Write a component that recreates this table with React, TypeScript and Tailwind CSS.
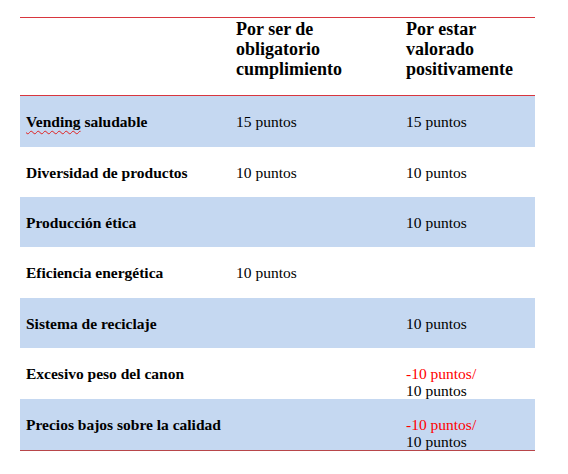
import React from "react";

type Row = {
  label: React.ReactNode;
  a?: string;
  b?: React.ReactNode;
  blue: boolean;
  h: string;
};

const neg = (
  <>
    <span className="text-[#ff0000]">-10 puntos/</span>
    <br />
    10 puntos
  </>
);

export default function App() {
  const rows: Row[] = [
    {
      label: (
        <>
          <span className="underline decoration-wavy decoration-[#e02020] decoration-1 underline-offset-[3px]">Vending</span> saludable
        </>
      ),
      a: "15 puntos",
      b: "15 puntos",
      blue: true,
      h: "h-[51px]",
    },
    { label: "Diversidad de productos", a: "10 puntos", b: "10 puntos", blue: false, h: "h-[50px]" },
    { label: "Producción ética", b: "10 puntos", blue: true, h: "h-[50px]" },
    { label: "Eficiencia energética", a: "10 puntos", blue: false, h: "h-[51px]" },
    { label: "Sistema de reciclaje", b: "10 puntos", blue: true, h: "h-[50px]" },
    { label: "Excesivo peso del canon", b: neg, blue: false, h: "h-[51px]" },
    { label: "Precios bajos sobre la calidad", b: neg, blue: true, h: "h-[51px]" },
  ];

  return (
    <div
      className="w-[568px] h-[474px] bg-white text-black pt-[17px] pl-[20px]"
      style={{ fontFamily: '"Liberation Serif", "Times New Roman", serif' }}
    >
      <div className="w-[515px] border-t border-[#d8363e]">
        <div className="grid grid-cols-[210px_170px_135px] h-[78px] border-b border-[#d8363e] text-[18px] leading-[20px] font-bold pt-[1px]">
          <div />
          <div className="pl-[6px]">
            Por ser de
            <br />
            obligatorio
            <br />
            cumplimiento
          </div>
          <div className="pl-[6px]">
            Por estar
            <br />
            valorado
            <br />
            positivamente
          </div>
        </div>
        {rows.map((r, i) => (
          <div
            key={i}
            className={`grid grid-cols-[210px_170px_135px] ${r.h} ${r.blue ? "bg-[#c5d8f1]" : "bg-white"} text-[15.5px] leading-[17px] pt-[17px]`}
          >
            <div className="pl-[6px] font-bold whitespace-nowrap">{r.label}</div>
            <div className="pl-[6px] whitespace-nowrap">{r.a}</div>
            <div className="pl-[6px] whitespace-nowrap">{r.b}</div>
          </div>
        ))}
        <div className="h-px bg-[#b8464a]" />
      </div>
    </div>
  );
}
